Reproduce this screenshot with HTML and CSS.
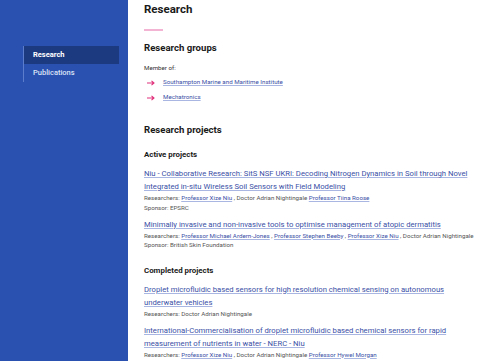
FILE: index.html
```html
<!DOCTYPE html>
<html lang="en">
<head>
  <meta charset="UTF-8">
  <title>Research</title>
  <link rel="stylesheet" href="styles.css">
</head>
<body>
  <div class="page">
    <aside class="sidebar">
      <ul class="side-nav">
        <li class="side-item active">Research</li>
        <li class="side-item">Publications</li>
      </ul>
    </aside>

    <main class="content">
      <h1 class="title">Research</h1>
      <div class="title-rule"></div>

      <h2 class="section">Research groups</h2>
      <p class="member">Member of:</p>
      <ul class="groups">
        <li>
          <svg class="arrow" width="8" height="6" viewBox="0 0 8 6"><path d="M0 3H7M4.5 0.8L7 3L4.5 5.2" fill="none" stroke="#e0307a" stroke-width="1.1"/></svg>
          <a href="#">Southampton Marine and Maritime Institute</a>
        </li>
        <li>
          <svg class="arrow" width="8" height="6" viewBox="0 0 8 6"><path d="M0 3H7M4.5 0.8L7 3L4.5 5.2" fill="none" stroke="#e0307a" stroke-width="1.1"/></svg>
          <a href="#">Mechatronics</a>
        </li>
      </ul>

      <h2 class="section projects-head">Research projects</h2>

      <h3 class="sub">Active projects</h3>
      <div class="project">
        <a class="project-title" href="#">Niu - Collaborative Research: SitS NSF UKRI: Decoding Nitrogen Dynamics in Soil through Novel Integrated in-situ Wireless Soil Sensors with Field Modeling</a>
        <p class="meta">Researchers: <a href="#">Professor Xize Niu</a> , Doctor Adrian Nightingale <a href="#">Professor Tiina Roose</a></p>
        <p class="meta">Sponsor: EPSRC</p>
      </div>
      <div class="project">
        <a class="project-title" href="#">Minimally invasive and non-invasive tools to optimise management of atopic dermatitis</a>
        <p class="meta">Researchers: <a href="#">Professor Michael Ardern-Jones</a> , <a href="#">Professor Stephen Beeby</a> , <a href="#">Professor Xize Niu</a> , Doctor Adrian Nightingale</p>
        <p class="meta">Sponsor: British Skin Foundation</p>
      </div>

      <h3 class="sub completed">Completed projects</h3>
      <div class="project">
        <a class="project-title" href="#">Droplet microfluidic based sensors for high resolution chemical sensing on autonomous underwater vehicles</a>
        <p class="meta">Researchers: Doctor Adrian Nightingale</p>
      </div>
      <div class="project">
        <a class="project-title" href="#">International-Commercialisation of droplet microfluidic based chemical sensors for rapid measurement of nutrients in water - NERC - Niu</a>
        <p class="meta">Researchers: <a href="#">Professor Xize Niu</a> , Doctor Adrian Nightingale <a href="#">Professor Hywel Morgan</a></p>
      </div>
    </main>
  </div>
</body>
</html>
```

FILE: styles.css
```css
/* Basis */
body {
  margin: 0;
  font-family: Roboto, "Liberation Sans", Arial, sans-serif;
  color: #1a1a1a;
  background-color: white;
}

.page {
  display: flex;
  min-height: 361px;
}

/* Blauwe zijbalk */
.sidebar {
  width: 128px;
  flex-shrink: 0;
  background-color: #2a50b0;
  padding-top: 46px;
}

.side-nav {
  list-style: none;
  margin: 0 9px 0 23px;
  padding: 0;
  border-left: 1px solid #5b7dcc;
}

.side-item {
  font-size: 7.5px;
  font-weight: 500;
  color: #dce4f6;
  height: 18px;
  line-height: 18px;
  padding-left: 9px;
}

.side-item.active {
  background-color: #1c3a80;
  color: white;
  font-weight: 700;
}

/* Inhoud */
.content {
  flex: 1;
  padding: 0 10px 0 16px;
}

.title {
  font-size: 11.5px;
  font-weight: 700;
  margin: 0;
  line-height: 18px;
}

.title-rule {
  width: 19px;
  height: 2px;
  background-color: #f3b3d2;
  margin: 11px 0 10px;
}

.section {
  font-size: 9.6px;
  font-weight: 700;
  margin: 0;
  line-height: 14px;
}

.member {
  font-size: 6.2px;
  line-height: 10px;
  margin: 8px 0 2px;
  color: #333;
}

.groups {
  list-style: none;
  margin: 0;
  padding: 0 0 0 3px;
}

.groups li {
  display: flex;
  align-items: center;
  gap: 8px;
  font-size: 6.2px;
  line-height: 15px;
}

.arrow {
  flex-shrink: 0;
}

a {
  color: #3a4fa6;
  text-decoration: underline;
  text-decoration-color: #aab6e2;
  text-underline-offset: 1px;
}

.projects-head {
  margin-top: 18px;
}

.sub {
  font-size: 7.9px;
  font-weight: 700;
  line-height: 10px;
  margin: 13px 0 7px;
}

.sub.completed {
  margin-top: 15px;
}

.project {
  margin-bottom: 4.5px;
}

.project-title {
  display: block;
  font-size: 7.7px;
  line-height: 13px;
}

.meta {
  font-size: 6.2px;
  color: #555;
  margin: 1px 0 0;
  line-height: 9.5px;
}

.meta + .meta {
  margin-top: 0;
}

.meta a {
  color: #3a4fa6;
}
```
